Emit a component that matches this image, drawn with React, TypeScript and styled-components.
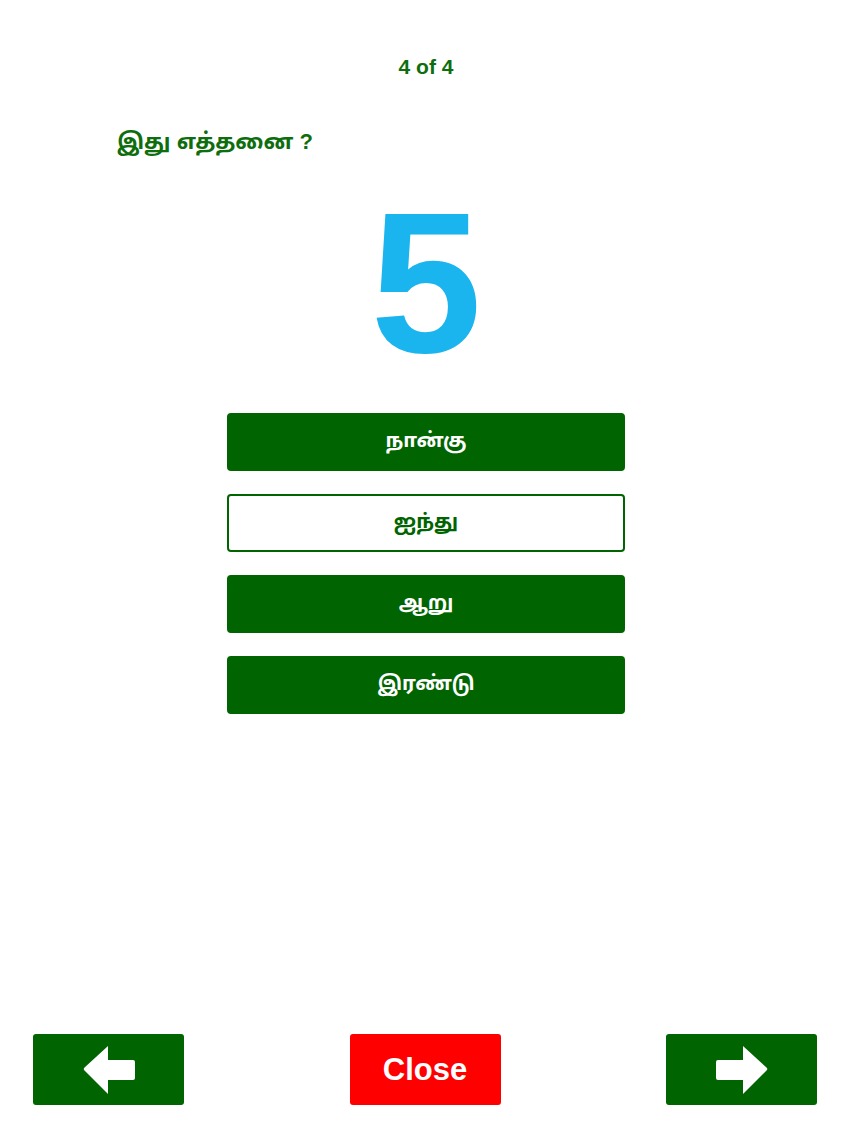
import styled, { createGlobalStyle } from 'styled-components';

const GlobalStyle = createGlobalStyle`
  html, body {
    margin: 0;
    padding: 0;
    background: #ffffff;
  }
  body {
    font-family: "Liberation Sans", Arial, sans-serif;
  }
`;

const GREEN = '#006400';

const Page = styled.div`
  width: 852px;
  height: 1136px;
  display: flex;
  flex-direction: column;
  box-sizing: border-box;
`;

const Counter = styled.div`
  margin-top: 54px;
  text-align: center;
  font-size: 21px;
  font-weight: bold;
  color: #0e6e0e;
  line-height: 26px;
`;

const Question = styled.h2`
  margin: 45px 0 0 117px;
  font-family: "Liberation Sans", "Noto Sans Tamil", "Noto Sans", sans-serif;
  font-size: 22px;
  font-weight: bold;
  color: #0e6e0e;
  line-height: 34px;
`;

const BigNumber = styled.div`
  margin-top: 24px;
  text-align: center;
  font-family: "Liberation Sans", Arial, sans-serif;
  font-weight: bold;
  font-size: 200px;
  line-height: 200px;
  height: 200px;
  color: #1ab4ee;
`;

const Options = styled.div`
  margin-top: 30px;
  display: flex;
  flex-direction: column;
  align-items: center;
  gap: 23px;
`;

const Option = styled.button<{ $selected?: boolean }>`
  width: 398px;
  height: 58px;
  box-sizing: border-box;
  border-radius: 4px;
  border: 2px solid ${GREEN};
  background: ${({ $selected }) => ($selected ? '#ffffff' : GREEN)};
  color: ${({ $selected }) => ($selected ? GREEN : '#ffffff')};
  font-family: "Noto Sans Tamil", "Noto Sans", sans-serif;
  font-size: 20px;
  font-weight: bold;
  display: flex;
  align-items: center;
  justify-content: center;
  padding: 0;
  cursor: pointer;
`;

const Footer = styled.div`
  margin-top: auto;
  margin-bottom: 31px;
  padding: 0 35px 0 33px;
  display: flex;
  justify-content: space-between;
  align-items: center;
`;

const NavButton = styled.button<{ $variant?: 'nav' | 'close' }>`
  width: 151px;
  height: 71px;
  border: none;
  border-radius: 3px;
  background: ${({ $variant }) => ($variant === 'close' ? '#ff0000' : GREEN)};
  color: #ffffff;
  font-family: "Liberation Sans", Arial, sans-serif;
  font-size: 31px;
  font-weight: bold;
  display: flex;
  align-items: center;
  justify-content: center;
  padding: 0;
  cursor: pointer;
`;

function Arrow({ dir }: { dir: 'left' | 'right' }) {
  return (
    <svg
      width="52"
      height="52"
      viewBox="0 0 52 52"
      style={{ transform: dir === 'right' ? 'scaleX(-1)' : undefined }}
    >
      <path
        d="M1 26 Q0.5 25 1 24 L25 2 L25 16 L50 16 Q52 16 52 18 L52 34 Q52 36 50 36 L25 36 L25 50 Z"
        fill="#ffffff"
      />
    </svg>
  );
}

const answers = [
  { id: 1, label: 'நான்கு', selected: false },
  { id: 2, label: 'ஐந்து', selected: true },
  { id: 3, label: 'ஆறு', selected: false },
  { id: 4, label: 'இரண்டு', selected: false },
];

export default function App() {
  return (
    <>
      <GlobalStyle />
      <Page>
        <Counter>4 of 4</Counter>
        <Question>இது எத்தனை ?</Question>
        <BigNumber>5</BigNumber>
        <Options>
          {answers.map((a) => (
            <Option key={a.id} $selected={a.selected}>
              {a.label}
            </Option>
          ))}
        </Options>
        <Footer>
          <NavButton aria-label="previous">
            <Arrow dir="left" />
          </NavButton>
          <NavButton $variant="close">Close</NavButton>
          <NavButton aria-label="next">
            <Arrow dir="right" />
          </NavButton>
        </Footer>
      </Page>
    </>
  );
}
